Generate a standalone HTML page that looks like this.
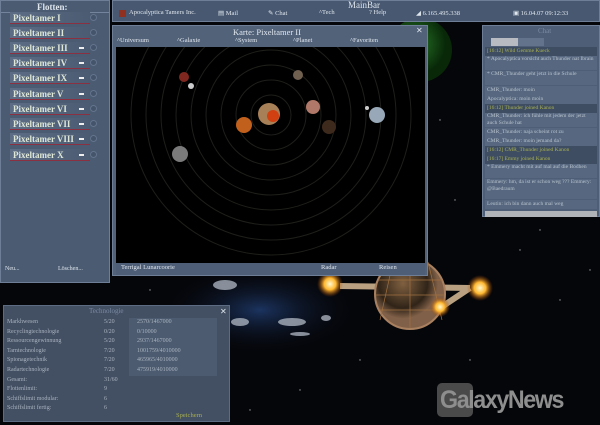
<!DOCTYPE html>
<html><head><style>
*{margin:0;padding:0;box-sizing:border-box}
body{width:600px;height:425px;overflow:hidden;background:#05060a;font-family:"Liberation Serif",serif;color:#dfe6ee;position:relative}
.abs{position:absolute}
.panel{background:#4b5b72;border:1px solid #6d7e96}
.fl{position:absolute;left:9px;width:80px;height:12px;font-size:9px;font-weight:bold;color:#dfe8d8;background:linear-gradient(90deg,#5d6d85,#4b5b72);border-bottom:1px solid #8a3040;padding-left:3px;line-height:12px}
.dot{position:absolute;left:89px;width:7px;height:7px;border-radius:50%;background:#44546a;border:1px solid #63748c}
.arr{position:absolute;left:78px;width:5px;height:2px;background:#eee}
.t{font-size:7px;white-space:nowrap;position:absolute}
.cl{position:absolute;left:2px;right:2px;font-size:5.5px;color:#b8c2ce;background:#56677f;height:9px;line-height:9px;padding-left:2px;overflow:hidden;white-space:nowrap}
.y{color:#a8b050;background:#3e4d62}
</style></head><body>
<svg class="abs" style="left:0;top:0" width="600" height="425">
<defs>
<radialGradient id="gp" cx=".4" cy=".4"><stop offset="0" stop-color="#2a7a2a"/><stop offset="1" stop-color="#082808"/></radialGradient>
<radialGradient id="orb"><stop offset="0" stop-color="#fff8d0"/><stop offset=".45" stop-color="#ffb830"/><stop offset="1" stop-color="#a04000" stop-opacity="0"/></radialGradient>
<radialGradient id="ball" cx=".4" cy=".35"><stop offset="0" stop-color="#806040"/><stop offset=".7" stop-color="#302418"/><stop offset="1" stop-color="#806048"/></radialGradient>
<radialGradient id="earth" cx=".5" cy=".5"><stop offset="0" stop-color="#1c3460"/><stop offset="1" stop-color="#05060a" stop-opacity="0"/></radialGradient>
</defs>
<circle cx="420" cy="50" r="32" fill="url(#gp)"/>
<ellipse cx="260" cy="310" rx="100" ry="45" fill="url(#earth)"/>
<g fill="#a8b0bc" opacity=".8"><ellipse cx="225" cy="285" rx="12" ry="5"/><ellipse cx="292" cy="322" rx="14" ry="4"/><ellipse cx="240" cy="322" rx="9" ry="4"/><ellipse cx="326" cy="318" rx="5" ry="3"/><ellipse cx="300" cy="334" rx="10" ry="2"/></g>
<path d="M340 286 L470 288 M440 308 L470 288" stroke="#b8a080" stroke-width="6"/>
<circle cx="410" cy="294" r="35" fill="url(#ball)" stroke="#a88060" stroke-width="2"/>
<g stroke="#a07040" stroke-width=".7" fill="none"><path d="M378 280 L442 280 M376 295 L444 295 M380 310 L440 310 M393 262 L380 320 M410 259 L410 328 M428 262 L442 320"/></g>
<circle cx="330" cy="284" r="13" fill="url(#orb)"/>
<circle cx="480" cy="288" r="13" fill="url(#orb)"/>
<circle cx="440" cy="307" r="10" fill="url(#orb)"/>
<g fill="#999"><circle cx="520" cy="250" r=".7"/><circle cx="560" cy="300" r=".7"/><circle cx="470" cy="360" r=".7"/><circle cx="300" cy="390" r=".7"/><circle cx="250" cy="410" r=".7"/><circle cx="540" cy="230" r=".7"/><circle cx="590" cy="270" r=".7"/><circle cx="440" cy="120" r=".7"/><circle cx="455" cy="200" r=".7"/><circle cx="360" cy="360" r=".7"/><circle cx="150" cy="290" r=".7"/></g>
</svg>
<div class="abs" style="left:437px;top:383px;width:36px;height:34px;background:#4a4a4a;border-radius:5px"></div>
<div class="abs" style="left:440px;top:386px;font:bold 25px 'Liberation Sans',sans-serif;color:#8e8e8e;letter-spacing:-1.5px;transform:scaleX(.93);transform-origin:left">GalaxyNews</div>

<div class="abs panel" style="left:0;top:0;width:110px;height:283px">
<div class="t" style="left:36px;top:1px;font-size:9px;font-weight:bold">Flotten:</div>
<div class="abs" style="left:0;top:11px;width:108px;height:1px;background:#73849c"></div>
<div class="fl" style="top:11px">Pixeltamer I</div><div class="dot" style="top:13px"></div>
<div class="fl" style="top:26px">Pixeltamer II</div><div class="dot" style="top:28px"></div>
<div class="fl" style="top:41px">Pixeltamer III</div><div class="arr" style="top:46px"></div><div class="dot" style="top:43px"></div>
<div class="fl" style="top:56px">Pixeltamer IV</div><div class="arr" style="top:61px"></div><div class="dot" style="top:58px"></div>
<div class="fl" style="top:71px">Pixeltamer IX</div><div class="arr" style="top:76px"></div><div class="dot" style="top:73px"></div>
<div class="fl" style="top:87px">Pixeltamer V</div><div class="arr" style="top:92px"></div><div class="dot" style="top:89px"></div>
<div class="fl" style="top:102px">Pixeltamer VI</div><div class="arr" style="top:107px"></div><div class="dot" style="top:104px"></div>
<div class="fl" style="top:117px">Pixeltamer VII</div><div class="arr" style="top:122px"></div><div class="dot" style="top:119px"></div>
<div class="fl" style="top:132px">Pixeltamer VIII</div><div class="arr" style="top:137px"></div><div class="dot" style="top:134px"></div>
<div class="fl" style="top:148px">Pixeltamer X</div><div class="arr" style="top:153px"></div><div class="dot" style="top:150px"></div>
<div class="t" style="left:4px;top:265px;font-size:6px">Neu...</div>
<div class="t" style="left:57px;top:265px;font-size:6px">Löschen...</div>
</div>

<div class="abs panel" style="left:112px;top:0;width:488px;height:22px;background:#485870">
<div class="t" style="left:235px;top:-1px;font-size:9px">MainBar</div>
<div class="abs" style="left:6px;top:9px;width:7px;height:7px;background:#903020"></div>
<div class="t" style="left:16px;top:8px;font-size:6.5px">Apocalyptica Tamers Inc.</div>
<div class="t" style="left:105px;top:8px;font-size:6.5px">▤ Mail</div>
<div class="t" style="left:155px;top:8px;font-size:6.5px">✎ Chat</div>
<div class="t" style="left:206px;top:8px;font-size:6.5px">^Tech</div>
<div class="t" style="left:256px;top:8px;font-size:6.5px">? Help</div>
<div class="t" style="left:303px;top:8px;font-size:6.5px">◢ 6.165.495.338</div>
<div class="t" style="left:400px;top:8px;font-size:6.5px">▣ 16.04.07 09:12:33</div>
</div>

<div class="abs panel" style="left:112px;top:25px;width:316px;height:251px;background:#526279">
<div class="t" style="left:120px;top:1px;font-size:8.5px">Karte: Pixeltamer II</div>
<div class="t" style="left:303px;top:0px;font-size:8px">✕</div>
<div class="t" style="left:4px;top:11px;font-size:6.5px">^Universum</div>
<div class="t" style="left:64px;top:11px;font-size:6.5px">^Galaxie</div>
<div class="t" style="left:122px;top:11px;font-size:6.5px">^System</div>
<div class="t" style="left:180px;top:11px;font-size:6.5px">^Planet</div>
<div class="t" style="left:237px;top:11px;font-size:6.5px">^Favoriten</div>
<svg class="abs" style="left:3px;top:21px" width="309" height="216">
<rect width="309" height="216" fill="#000"/>
<g fill="none" stroke="#1e1e1a" stroke-width="1">
<circle cx="155" cy="68" r="20"/><circle cx="155" cy="68" r="35"/><circle cx="155" cy="68" r="50"/><circle cx="155" cy="68" r="65"/><circle cx="155" cy="68" r="80"/><circle cx="155" cy="68" r="95"/><circle cx="155" cy="68" r="110"/><circle cx="155" cy="68" r="125"/><circle cx="155" cy="68" r="140"/>
</g>
<circle cx="153" cy="67" r="11" fill="#a88058"/><circle cx="157" cy="69" r="6" fill="#d04010"/>
<circle cx="68" cy="30" r="5" fill="#802820"/><circle cx="75" cy="39" r="3" fill="#ccc"/>
<circle cx="182" cy="28" r="5" fill="#706050"/>
<circle cx="128" cy="78" r="8" fill="#c0601c"/>
<circle cx="197" cy="60" r="7" fill="#b07868"/>
<circle cx="213" cy="80" r="7" fill="#3e2a1c"/>
<circle cx="261" cy="68" r="8" fill="#98a8b8"/><circle cx="251" cy="61" r="2" fill="#ccc"/>
<circle cx="64" cy="107" r="8" fill="#7a7a7a"/>
</svg>
<div class="abs" style="left:3px;top:237px;width:309px;height:12px;background:#4e5e76"></div>
<div class="t" style="left:8px;top:238px;font-size:6.5px">Terrigal Lunarcoorie</div>
<div class="t" style="left:208px;top:238px;font-size:6.5px">Radar</div>
<div class="t" style="left:266px;top:238px;font-size:6.5px">Reisen</div>
</div>

<div class="abs panel" style="left:482px;top:25px;width:118px;height:192px;background:#4e5e76">
<div class="t" style="left:55px;top:1px;font-size:7px;color:#7a8aa2">Chat</div>
<div class="abs" style="left:8px;top:12px;width:27px;height:8px;background:#b8bcc2"></div>
<div class="abs" style="left:35px;top:12px;width:26px;height:8px;background:#63738b"></div>
<div class="cl y" style="top:21px">[16:12] Wild Gemme Kueck</div>
<div class="cl" style="top:30px;height:14px;line-height:7px;white-space:normal">* Apocalyptica vorsicht auch Thunder nat Ibrain</div>
<div class="cl" style="top:45px;height:14px;line-height:7px;white-space:normal">* CMR_Thunder geht jetzt in die Schule</div>
<div class="cl" style="top:60px">CMR_Thunder: moin</div>
<div class="cl" style="top:69px">Apocalyptica: moin moin</div>
<div class="cl y" style="top:78px">[16:12] Thunder joined Kanon</div>
<div class="cl" style="top:87px;height:14px;line-height:7px;white-space:normal">CMR_Thunder: ich fühle mit jedem der jetzt auch Schule hat</div>
<div class="cl" style="top:102px">CMR_Thunder: naja scheint rot zu</div>
<div class="cl" style="top:111px">CMR_Thunder: moin jemand da?</div>
<div class="cl y" style="top:120px">[16:12] CMR_Thunder joined Kanon</div>
<div class="cl y" style="top:129px">[16:17] Emmy joined Kanon</div>
<div class="cl" style="top:138px;height:14px;line-height:7px;white-space:normal">* Emmery macht mit auf mal auf die Bodhen</div>
<div class="cl" style="top:153px;height:20px;line-height:6.5px;white-space:normal">Emmery: hm, da ist er schon weg ??? Emmery: @Baedraum</div>
<div class="cl" style="top:174px">Leutin: ich bin dann auch mal weg</div>
<div class="abs" style="left:2px;top:185px;width:112px;height:6px;background:#b0b4b8"></div>
</div>

<div class="abs panel" style="left:3px;top:305px;width:227px;height:117px;background:#434f63;border-color:#5d6c82">
<div class="t" style="left:85px;top:1px;font-size:7px;color:#7a8aa2">Technologie</div>
<div class="t" style="left:216px;top:1px;font-size:8px">✕</div>
<div class="t" style="left:3px;top:12px;font-size:6px;color:#a8b2be;line-height:9.6px">Markhwesen<br>Recyclingtechnologie<br>Ressourcengewinnung<br>Tarntechnologie<br>Spionagetechnik<br>Radartechnologie<br>Gesamt:<br>Flottenlimit:<br>Schiffslimit modular:<br>Schiffslimit fertig:</div>
<div class="t" style="left:100px;top:12px;font-size:6px;color:#a8b2be;line-height:9.6px">5/20<br>0/20<br>5/20<br>7/20<br>7/20<br>7/20<br>31/60<br>9<br>6<br>6</div>
<div class="abs" style="left:125px;top:12px;width:88px;height:58px;background:#4c5b70"></div>
<div class="t" style="left:133px;top:12px;font-size:6px;color:#a8b2be;line-height:9.6px">2570/1467000<br>0/10000<br>2937/1467000<br>1001759/4010000<br>465965/4010000<br>475919/4010000</div>
<div class="t" style="left:172px;top:106px;font-size:6.5px;color:#a8b050">Speichern</div>
</div>
</body></html>
